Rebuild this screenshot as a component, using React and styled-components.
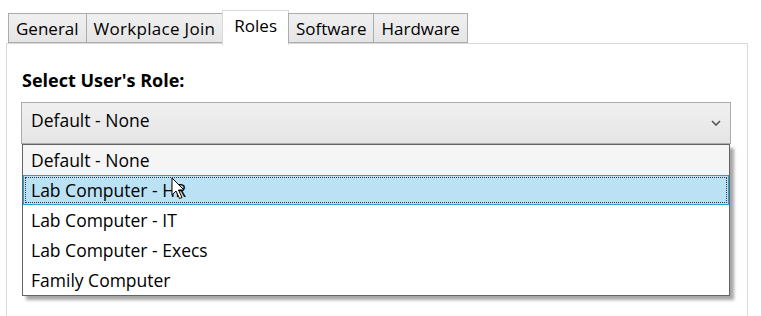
import React from 'react';
import styled, { createGlobalStyle } from 'styled-components';

const GlobalStyle = createGlobalStyle`
    html, body {
        margin: 0;
        background: #ffffff;
    }
    body {
        font-family: "Open Sans", "Noto Sans", "Liberation Sans", sans-serif;
        color: #000;
    }
`;

const WindowStyle = styled.div`
    width: 761px;
    height: 316px;
    overflow: hidden;
    padding: 10px 0 0 6px;
    box-sizing: border-box;
    position: relative;
`;

const TabStrip = styled.div`
    display: flex;
    align-items: flex-end;
    padding-left: 2px;
    height: 34px;
    position: relative;
    z-index: 2;
`;

const Tab = styled.div`
    box-sizing: border-box;
    height: ${(p) => (p.$active ? '35px' : '30px')};
    margin-bottom: ${(p) => (p.$active ? '-1px' : '1px')};
    padding: ${(p) => (p.$active ? '3px 11px 0' : '0 7px')};
    margin-left: -1px;
    display: flex;
    align-items: ${(p) => (p.$active ? 'flex-start' : 'center')};
    font-size: 17px;
    letter-spacing: ${(p) => p.$spacing || '0'};
    border: 1px solid ${(p) => (p.$active ? '#d9d9d9' : '#acacac')};
    border-bottom: ${(p) => (p.$active ? 'none' : '1px solid #acacac')};
    background: ${(p) => (p.$active ? '#ffffff' : 'linear-gradient(#f0f0f0, #e5e5e5)')};
    &:first-child {
        margin-left: 0;
    }
`;

const Panel = styled.div`
    box-sizing: border-box;
    width: 742px;
    height: 300px;
    margin-top: -1px;
    border: 1px solid #d9d9d9;
    padding: 24px 0 0 14px;
    position: relative;
`;

const Label = styled.div`
    font-weight: bold;
    font-size: 18px;
    padding-left: 1px;
    height: 34px;
`;

const Combo = styled.div`
    box-sizing: border-box;
    width: 710px;
    height: 42px;
    border: 1px solid #acacac;
    background: linear-gradient(#f0f0f0, #e5e5e5);
    display: flex;
    align-items: center;
    justify-content: space-between;
    padding: 0 9px 6px 9px;
    font-size: 17.5px;

    svg {
        margin-top: 6px;
    }
`;

const DropList = styled.div`
    position: absolute;
    left: 15px;
    top: 100px;
    width: 708px;
    box-sizing: border-box;
    border: 1px solid #646464;
    background: #ffffff;
    box-shadow: 4px 4px 3px rgba(0, 0, 0, 0.35);
    z-index: 3;
    display: flex;
    flex-direction: column;
`;

const Item = styled.div`
    box-sizing: border-box;
    height: 30px;
    display: flex;
    align-items: center;
    padding-left: 7px;
    font-size: 17.5px;
    position: relative;
    background: ${(p) => (p.$selected ? '#f5f5f5' : p.$hover ? '#bbe2f4' : '#ffffff')};
    border: 1px solid ${(p) => (p.$hover ? '#26a0da' : 'transparent')};
    ${(p) =>
        p.$hover &&
        `
        &::after {
            content: '';
            position: absolute;
            inset: 1px;
            border: 1px dotted #333;
        }
    `}
`;

const Cursor = styled.svg`
    position: absolute;
    left: 171px;
    top: 177px;
    z-index: 5;
`;

const roles = [
    'Default - None',
    'Lab Computer - HR',
    'Lab Computer - IT',
    'Lab Computer - Execs',
    'Family Computer',
];

export default function App() {
    return (
        <>
            <GlobalStyle />
            <WindowStyle>
                <TabStrip>
                    <Tab>General</Tab>
                    <Tab $spacing="0.3px">Workplace Join</Tab>
                    <Tab $active>Roles</Tab>
                    <Tab>Software</Tab>
                    <Tab>Hardware</Tab>
                </TabStrip>
                <Panel>
                    <Label>Select User's Role:</Label>
                    <Combo>
                        <span>Default - None</span>
                        <svg width="10" height="6" viewBox="0 0 10 6">
                            <path d="M1 1 L5 5 L9 1" fill="none" stroke="#555" strokeWidth="1.6" />
                        </svg>
                    </Combo>
                    <DropList>
                        {roles.map((r, i) => (
                            <Item key={r} $selected={i === 0} $hover={i === 1}>
                                {r}
                            </Item>
                        ))}
                    </DropList>
                </Panel>
                <Cursor width="16" height="24" viewBox="0 0 16 24">
                    <path
                        d="M1 1 L1 18 L5 14 L8.5 21.5 L11 20.5 L7.5 13 L13 13 Z"
                        fill="#fff"
                        stroke="#000"
                        strokeWidth="1"
                        strokeLinejoin="round"
                    />
                </Cursor>
            </WindowStyle>
        </>
    );
}
